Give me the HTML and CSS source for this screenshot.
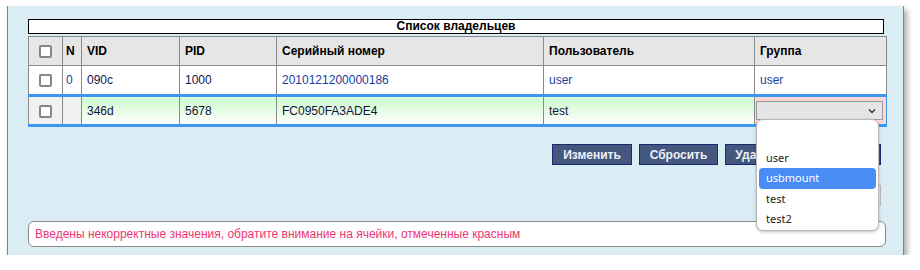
FILE: index.html
```html
<!DOCTYPE html>
<html lang="ru">
<head>
<meta charset="utf-8">
<title>Список владельцев</title>
<link rel="stylesheet" href="styles.css">
</head>
<body>
<div class="panel">
  <div class="title">Список владельцев</div>
  <table class="grid">
    <colgroup>
      <col class="c-chk"><col class="c-n"><col class="c-vid"><col class="c-pid"><col class="c-ser"><col class="c-user"><col class="c-grp">
    </colgroup>
    <tr class="head">
      <th class="chk"><span class="box"></span></th>
      <th class="n">N</th>
      <th>VID</th>
      <th>PID</th>
      <th>Серийный номер</th>
      <th>Пользователь</th>
      <th>Группа</th>
    </tr>
    <tr class="row">
      <td class="chk"><span class="box"></span></td>
      <td class="n link">0</td>
      <td class="dark">090c</td>
      <td class="dark">1000</td>
      <td class="link">2010121200000186</td>
      <td class="link">user</td>
      <td class="link">user</td>
    </tr>
    <tr class="edit">
      <td class="chk grey"><span class="box"></span></td>
      <td class="n grey"></td>
      <td>346d</td>
      <td>5678</td>
      <td>FC0950FA3ADE4</td>
      <td>test</td>
      <td class="bad">
        <div class="selwrap">
          <div class="select">
            <svg class="chev" width="8" height="6" viewBox="0 0 8 6"><path d="M1 1.5 L4 4.5 L7 1.5" fill="none" stroke="#333" stroke-width="1.4"/></svg>
          </div>
          <div class="popup">
            <div class="opt"></div>
            <div class="opt">user</div>
            <div class="opt sel">usbmount</div>
            <div class="opt">test</div>
            <div class="opt">test2</div>
          </div>
        </div>
      </td>
    </tr>
  </table>
  <div class="actions">
    <button class="btn">Изменить</button>
    <button class="btn">Сбросить</button>
    <button class="btn">Удалить</button>
    <button class="btn">Добавить</button>
  </div>
  <div class="actions2">
    <button class="btn2">Применить</button>
  </div>
  <div class="error">Введены некорректные значения, обратите внимание на ячейки, отмеченные красным</div>
</div>
</body>
</html>
```
FILE: styles.css
```css
html, body {
  margin: 0;
  padding: 0;
  background: #ffffff;
}
body {
  font-family: "Liberation Sans", Arial, sans-serif;
  font-size: 12px;
  color: #000;
}
.panel {
  margin: 6px 0 0 7px;
  width: 897px;
  height: 249px;
  box-sizing: border-box;
  background: #daedf5;
  border-left: 1px solid #3a9ad6;
  border-right: 1px solid #3a9ad6;
  box-shadow: 3px 4px 6px rgba(0, 0, 0, 0.35);
  padding: 13px 19px 0 20px;
  display: flex;
  flex-direction: column;
}
.title {
  height: 13px;
  line-height: 13px;
  border: 1px solid #000;
  background: #fff;
  text-align: center;
  font-weight: bold;
  font-size: 12px;
}
.grid {
  margin-top: 2px;
  width: 858px;
  border-collapse: collapse;
  table-layout: fixed;
}
.c-chk { width: 34px; }
.c-n { width: 19px; }
.c-vid { width: 98px; }
.c-pid { width: 97px; }
.c-ser { width: 267px; }
.c-user { width: 211px; }
.c-grp { width: 132px; }
.grid th, .grid td {
  border: 1px solid #8a8a8a;
  padding: 0 5px;
  text-align: left;
  white-space: nowrap;
  overflow: visible;
}
.grid th {
  height: 28px;
  background: #e6e6e6;
  font-weight: bold;
}
.grid .row td {
  height: 28px;
  background: #fff;
}
.grid th.n, .grid td.n {
  padding: 0 3px;
}
.grid .chk {
  text-align: center;
  padding: 0;
}
.box {
  display: inline-block;
  width: 9px;
  height: 9px;
  border: 2px solid #85858f;
  border-radius: 2px;
  background: #fff;
  vertical-align: middle;
}
.link { color: #1a3c9e; }
.dark { color: #141450; }
.grid .edit td {
  height: 27px;
  border-top: 3px solid #3c98ee;
  border-bottom: 3px solid #3c98ee;
  background: linear-gradient(#ccfacc, #ffffff);
  color: #141440;
}
.grid .edit td.grey {
  background: #f1f1f1;
}
.grid .edit td.bad {
  background: #ffd6d6;
  border-right: 1px solid #3c98ee;
  padding: 0 3px 0 1px;
}
.selwrap {
  position: relative;
}
.select {
  height: 17px;
  border: 1px solid #9a9a9a;
  background: #e5e5e5;
  position: relative;
}
.chev {
  position: absolute;
  right: 6px;
  top: 6px;
}
.popup {
  position: absolute;
  left: 0;
  top: 18px;
  width: 121px;
  height: 103px;
  padding: 7px 0 0 0;
  background: #fff;
  border: 1px solid #b8b8b8;
  border-radius: 7px;
  box-shadow: 0 1px 3px rgba(0, 0, 0, 0.25);
  font-family: "Noto Sans", sans-serif;
  font-size: 11px;
  color: #222;
  z-index: 5;
}
.opt {
  height: 20.5px;
  line-height: 20.5px;
  padding: 0 7px;
  margin: 0 2px;
}
.opt.sel {
  background: #4a8cf5;
  color: #fff;
  border-radius: 4px;
}
.actions {
  margin-top: 17px;
  display: flex;
  justify-content: flex-end;
  gap: 7px;
  padding-right: 3px;
}
.btn {
  height: 21px;
  padding: 0 0;
  width: 80px;
  background: #44577f;
  border: 1px solid #1c2a72;
  color: #eef0f6;
  font-family: "Liberation Sans", Arial, sans-serif;
  font-weight: bold;
  font-size: 12px;
}
.btn:nth-child(2) { width: 79px; }
.btn:nth-child(3) { width: 70px; }
.btn:nth-child(4) { width: 79px; }
.actions2 {
  margin-top: 20px;
  display: flex;
  justify-content: flex-end;
  padding-right: 3px;
}
.btn2 {
  height: 21px;
  width: 80px;
  background: #e6e6e6;
  border: 1px solid #bdbdbd;
  color: #888;
  font-family: "Liberation Sans", Arial, sans-serif;
  font-size: 12px;
}
.error {
  margin-top: 15px;
  height: 24px;
  line-height: 24px;
  border: 1px solid #8a8a8a;
  border-radius: 6px;
  background: #fff;
  padding: 0 6px;
  width: 844px;
  color: #ec3673;
  font-size: 12px;
}
```
